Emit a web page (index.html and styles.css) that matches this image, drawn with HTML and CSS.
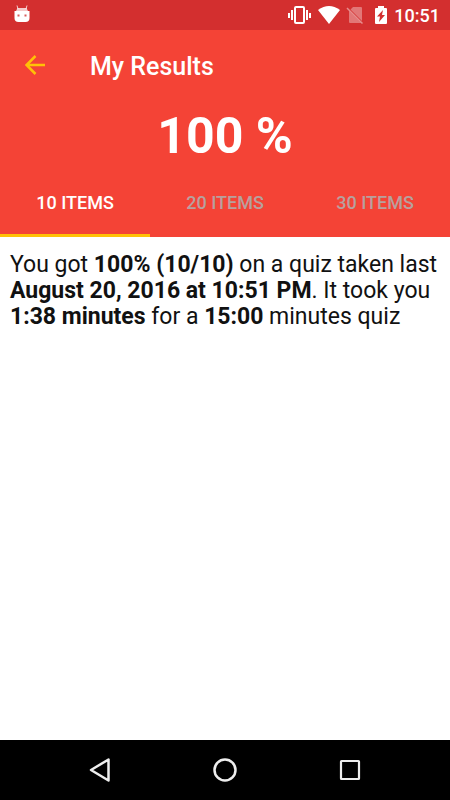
FILE: index.html
```
<!DOCTYPE html>
<html lang="en">
<head>
    <meta charset="UTF-8">
    <meta name="viewport" content="width=device-width, initial-scale=1.0">
    <title>My Results</title>
    <link rel="stylesheet" href="styles.css">
</head>
<body>

    <div class="status-bar">
        <svg class="notification" width="16" height="18" viewBox="0 0 16 18" aria-hidden="true">
            <path d="M4 4L3 0.500M12 4L13 0.500" stroke="#fff" stroke-opacity="0.75" fill="none"/>
            <path d="M3.500 3h9l2 4h-13z" fill="#fff" fill-opacity="0.75"/>
            <path d="M0.500 6h15v7q0 4-4 4h-7q-4 0-4-4z" fill="#fff"/>
            <path d="M3.500 9.500h2v2h-2zM10.500 9.500h2v2h-2z" fill="#d85c5c"/>
        </svg>
        <div class="status-icons">
            <svg width="24" height="20" viewBox="0 0 24 20" aria-hidden="true">
                <rect x="7" y="2" width="9" height="16" rx="1" fill="none" stroke="#fff" stroke-width="2"/>
                <path d="M4 5v10M19 5v10M1 8v5M22 8v5" stroke="#fff" stroke-width="2"/>
            </svg>
            <svg width="24" height="20" viewBox="0 0 24 20" aria-hidden="true">
                <path d="M1 5Q12-3 23 5L12 19z" fill="#fff"/>
            </svg>
            <svg width="23" height="20" viewBox="0 0 23 20" aria-hidden="true">
                <path d="M7 2h8q1 0 1 1v13L4.500 4.500zM3 6l12 12H4q-1 0-1-1z" fill="#fff" fill-opacity="0.35"/>
                <path d="M1 3l15.500 15.500" stroke="#fff" stroke-opacity="0.45" stroke-width="1.500"/>
            </svg>
            <svg width="14" height="20" viewBox="0 0 14 20" aria-hidden="true">
                <path d="M4 1h6v2h2q1 0 1 1v14q0 1-1 1H2q-1 0-1-1V4q0-1 1-1h2z" fill="#fff"/>
                <path d="M9 5L3 11.500h3L5 17l6-7H8z" fill="#d32f2f"/>
            </svg>
        </div>
        <span class="clock">10:51</span>
    </div>

    <header>
        <div class="toolbar">
            <button class="back" aria-label="Back">
                <svg width="20" height="20" viewBox="0 0 20 20" aria-hidden="true">
                    <path d="M20 10H2M10.500 1L1.500 10l9 9" fill="none" stroke="#ffc107" stroke-width="2.500"/>
                </svg>
            </button>
            <h1>My Results</h1>
        </div>
        <p class="score">100 %</p>
        <div class="tabs" role="tablist">
            <button class="tab active" role="tab" aria-selected="true">10 ITEMS</button>
            <button class="tab" role="tab" aria-selected="false">20 ITEMS</button>
            <button class="tab" role="tab" aria-selected="false">30 ITEMS</button>
        </div>
    </header>

    <main>
        <p>You got <b>100% (10/10)</b> on a quiz taken last <b>August 20, 2016 at 10:51 PM</b>. It took you <b>1:38 minutes</b> for a <b>15:00</b> minutes quiz</p>
    </main>

    <nav class="nav-bar">
        <button class="nav-button" aria-label="Back">
            <svg width="26" height="26" viewBox="0 0 26 26" aria-hidden="true">
                <path d="M21.500 2.500v21L4 13z" fill="none" stroke="#eee" stroke-width="2.500" stroke-linejoin="round"/>
            </svg>
        </button>
        <button class="nav-button" aria-label="Home">
            <svg width="26" height="26" viewBox="0 0 26 26" aria-hidden="true">
                <circle cx="13" cy="13" r="10.500" fill="none" stroke="#eee" stroke-width="2.500"/>
            </svg>
        </button>
        <button class="nav-button" aria-label="Recent apps">
            <svg width="26" height="26" viewBox="0 0 26 26" aria-hidden="true">
                <rect x="4" y="4" width="18" height="18" rx="0.500" fill="none" stroke="#eee" stroke-width="2.200"/>
            </svg>
        </button>
    </nav>

</body>
</html>
```

FILE: styles.css
```
body {
    display: flex;
    flex-direction: column;
    min-height: 100vh;
    margin: 0;
    font-family: Roboto, sans-serif;
    background-color: #fff;
    color: #111;
}

button {
    padding: 0;
    border: none;
    background: none;
    font-family: inherit;
    cursor: pointer;
}

svg {
    display: block;
}

.status-bar {
    display: flex;
    align-items: center;
    height: 30px;
    padding: 0 10px 0 14px;
    background-color: #d32f2f;
    color: #fff;
}

.notification {
    margin-bottom: 2px;
}

.status-icons {
    display: flex;
    gap: 5px;
    margin-left: auto;
}

.clock {
    margin-left: 6px;
    font-size: 18px;
    font-weight: 500;
}

header {
    background-color: #f44336;
    color: #fff;
}

.toolbar {
    display: flex;
    align-items: center;
    height: 70px;
}

.back {
    display: flex;
    align-items: center;
    justify-content: center;
    width: 70px;
    height: 70px;
}

.toolbar h1 {
    margin: 0 20px;
    padding-top: 2px;
    font-size: 25px;
    font-weight: 500;
}

.score {
    margin: 0;
    font-size: 50px;
    font-weight: bold;
    line-height: 72px;
    text-align: center;
}

.tabs {
    display: flex;
}

.tab {
    flex: 1;
    height: 65px;
    padding-bottom: 2px;
    border-bottom: 3px solid transparent;
    font-size: 18px;
    font-weight: 500;
    color: #b8a09e;
}

.tab.active {
    border-bottom-color: #ffc107;
    color: #fff;
}

main {
    flex: 1;
    padding: 15px 10px;
}

main p {
    margin: 0;
    font-size: 23px;
    line-height: 26px;
}

.nav-bar {
    display: flex;
    justify-content: center;
    height: 60px;
    background-color: #000;
}

.nav-button {
    display: flex;
    align-items: center;
    justify-content: center;
    width: 125px;
}
```
